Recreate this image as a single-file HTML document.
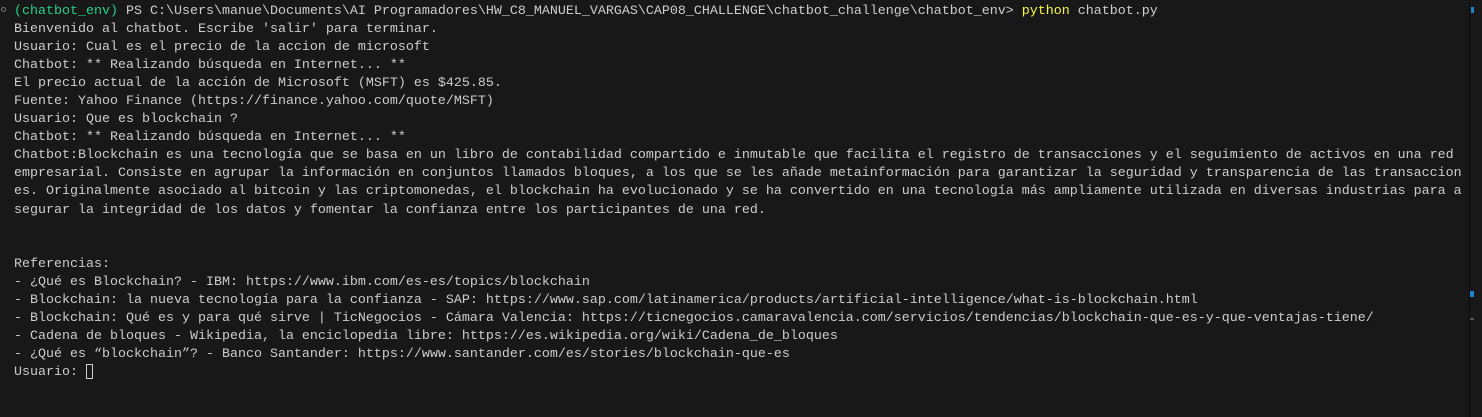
<!DOCTYPE html>
<html><head><meta charset="utf-8"><style>
html,body{margin:0;padding:0;background:#181818;width:1482px;height:417px;overflow:hidden}
pre{position:absolute;left:14px;top:3px;margin:0;font-family:"Liberation Mono",monospace;font-size:13.33px;line-height:18.05px;color:#cccccc;white-space:pre}
.g{color:#23d18b}.y{color:#f5f543}
.cur{display:inline-block;width:7px;height:15px;border:1px solid #cccccc;vertical-align:-4px;box-sizing:border-box}
</style></head><body>
<div style="position:absolute;left:1469px;top:0;width:1px;height:417px;background:#0a0a0a"></div>
<div style="position:absolute;left:1471px;top:7px;width:3px;height:6px;background:#1a85c8"></div>
<div style="position:absolute;left:1470px;top:291px;width:4px;height:6px;background:#1a85c8"></div>
<div style="position:absolute;left:1470px;top:318px;width:4px;height:2px;background:#555"></div>
<div style="position:absolute;left:1px;top:7px;width:5px;height:5px;border-radius:50%;border:1px solid #777;box-sizing:border-box"></div>
<pre><span class="g">(chatbot_env)</span> PS C:\Users\manue\Documents\AI Programadores\HW_C8_MANUEL_VARGAS\CAP08_CHALLENGE\chatbot_challenge\chatbot_env&gt; <span class="y">python</span> chatbot.py
Bienvenido al chatbot. Escribe 'salir' para terminar.
Usuario: Cual es el precio de la accion de microsoft
Chatbot: ** Realizando búsqueda en Internet... **
El precio actual de la acción de Microsoft (MSFT) es $425.85.
Fuente: Yahoo Finance (https://finance.yahoo.com/quote/MSFT)
Usuario: Que es blockchain ?
Chatbot: ** Realizando búsqueda en Internet... **
Chatbot:Blockchain es una tecnología que se basa en un libro de contabilidad compartido e inmutable que facilita el registro de transacciones y el seguimiento de activos en una red
empresarial. Consiste en agrupar la información en conjuntos llamados bloques, a los que se les añade metainformación para garantizar la seguridad y transparencia de las transaccion
es. Originalmente asociado al bitcoin y las criptomonedas, el blockchain ha evolucionado y se ha convertido en una tecnología más ampliamente utilizada en diversas industrias para a
segurar la integridad de los datos y fomentar la confianza entre los participantes de una red.


Referencias:
- ¿Qué es Blockchain? - IBM: https://www.ibm.com/es-es/topics/blockchain
- Blockchain: la nueva tecnología para la confianza - SAP: https://www.sap.com/latinamerica/products/artificial-intelligence/what-is-blockchain.html
- Blockchain: Qué es y para qué sirve | TicNegocios - Cámara Valencia: https://ticnegocios.camaravalencia.com/servicios/tendencias/blockchain-que-es-y-que-ventajas-tiene/
- Cadena de bloques - Wikipedia, la enciclopedia libre: https://es.wikipedia.org/wiki/Cadena_de_bloques
- ¿Qué es “blockchain”? - Banco Santander: https://www.santander.com/es/stories/blockchain-que-es
Usuario: <span class="cur"></span></pre>
</body></html>
